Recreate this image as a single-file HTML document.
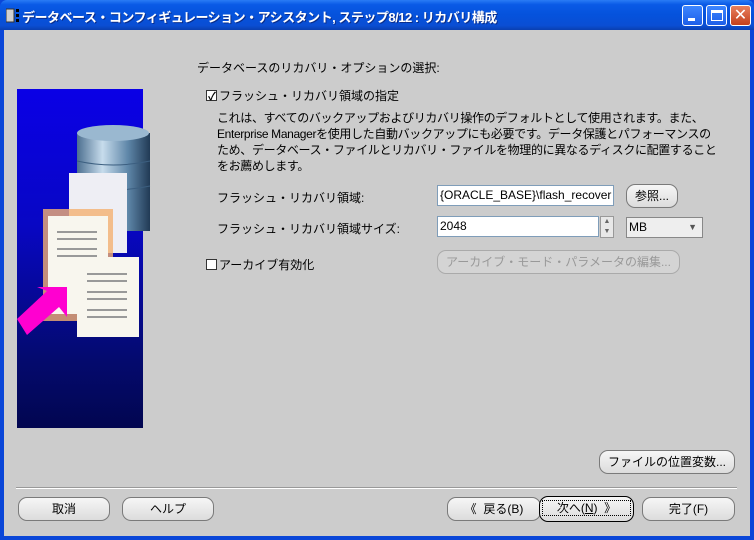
<!DOCTYPE html>
<html><head><meta charset="utf-8"><style>
*{margin:0;padding:0;box-sizing:border-box}
body{width:754px;height:540px;overflow:hidden;background:#0a46d8;font-family:"Liberation Sans","Noto Sans CJK JP",sans-serif;font-size:12px;color:#000;position:relative}
.title{position:absolute;left:0;top:0;width:754px;height:30px;background:linear-gradient(#2a7cf5 0%,#0a5ae6 15%,#0552dc 50%,#0a4ed4 85%,#0a3fb0 100%);border-radius:7px 7px 0 0}
.title .t{position:absolute;left:22px;top:7px;color:#fff;font-size:13px;font-weight:bold;letter-spacing:-0.5px;text-shadow:1px 1px #0a2d8a}
.client{position:absolute;left:4px;top:30px;width:746px;height:506px;background:#cccccc}
.abs{position:absolute;white-space:nowrap}
.btn{position:absolute;border:1px solid #7a7a7a;border-radius:9px;background:linear-gradient(#f6f6f6,#dcdcdc);text-align:center;line-height:22px;height:24px;font-size:12px}
.inp{position:absolute;background:#fff;border:1px solid #7f9db9;height:21px;line-height:19px;padding-left:2px;font-size:12px}
.cb{display:inline-block;width:11px;height:11px;border:1px solid #333;background:#fff;vertical-align:-1px;margin-right:2px;position:relative}
.wb{position:absolute;top:5px;width:21px;height:21px;border:1px solid #fff;border-radius:3px;background:linear-gradient(#3d86ff,#1d5ee8)}
</style></head><body>
<div class="title">
 <svg style="position:absolute;left:6px;top:8px" width="14" height="15"><rect x="0" y="1" width="8" height="13" fill="#d0d0d0" stroke="#333"/><rect x="10" y="1" width="3" height="3" fill="#000"/><rect x="10" y="6" width="3" height="3" fill="#000"/><rect x="10" y="11" width="3" height="3" fill="#000"/></svg>
 <div class="t">データベース・コンフィギュレーション・アシスタント, ステップ8/12 : リカバリ構成</div>
 <div class="wb" style="left:682px"><div style="position:absolute;left:5px;top:12px;width:7px;height:3px;background:#fff"></div></div>
 <div class="wb" style="left:706px"><div style="position:absolute;left:4px;top:4px;width:12px;height:11px;border:1px solid #fff;border-top-width:3px"></div></div>
 <div class="wb" style="left:730px;background:linear-gradient(#e8805e,#c4401c);color:#fff;font-size:16px;text-align:center;line-height:19px">✕</div>
</div>
<div class="client">
 <div class="abs" style="left:13px;top:59px;width:126px;height:339px;background:linear-gradient(#0a00e6 0%,#0807c4 40%,#040a6e 80%,#020650 100%);overflow:visible">
  <svg width="140" height="339" style="overflow:visible">
   <defs><linearGradient id="cy" x1="0" x2="1"><stop offset="0" stop-color="#4c6f90"/><stop offset=".35" stop-color="#c7dcec"/><stop offset=".7" stop-color="#5e86a8"/><stop offset="1" stop-color="#213a55"/></linearGradient></defs>
   <rect x="60" y="44" width="73" height="98" fill="url(#cy)"/>
   <ellipse cx="96" cy="44" rx="36" ry="8" fill="#9ab8d0"/>
   <path d="M60 72 q36 8 73 0 M60 97 q36 8 73 0" stroke="#3c5f80" fill="none"/>
   <rect x="52" y="84" width="58" height="80" fill="#eeeef4"/>
   <rect x="26" y="120" width="70" height="112" fill="#f4b070" opacity=".8"/>
   <rect x="31" y="127" width="60" height="98" fill="#f8f6ee"/>
   <rect x="60" y="168" width="62" height="80" fill="#f8f6ee"/>
   <g fill="#999"><rect x="70" y="184" width="40" height="2"/><rect x="70" y="191" width="40" height="2"/><rect x="70" y="202" width="40" height="2"/><rect x="70" y="209" width="40" height="2"/><rect x="70" y="220" width="40" height="2"/><rect x="70" y="227" width="40" height="2"/><rect x="40" y="142" width="40" height="2"/><rect x="40" y="149" width="40" height="2"/><rect x="40" y="159" width="40" height="2"/><rect x="40" y="166" width="40" height="2"/></g>
   <path d="M0 230 L30 202 L20 198 L50 198 L50 228 L42 218 L10 246 Z" fill="#ff00d0"/>
  </svg>
 </div>
 <div class="abs" style="left:193px;top:29px">データベースのリカバリ・オプションの選択:</div>
 <div class="abs" style="left:202px;top:57px"><span class="cb"><span style="position:absolute;left:1px;top:-3px;font-size:11px;font-weight:bold">✓</span></span>フラッシュ・リカバリ領域の指定</div>
 <div class="abs" style="left:213px;top:80px;line-height:16px;letter-spacing:-0.35px">これは、すべてのバックアップおよびリカバリ操作のデフォルトとして使用されます。また、<br>Enterprise Managerを使用した自動バックアップにも必要です。データ保護とパフォーマンスの<br>ため、データベース・ファイルとリカバリ・ファイルを物理的に異なるディスクに配置すること<br>をお薦めします。</div>
 <div class="abs" style="left:213px;top:159px">フラッシュ・リカバリ領域:</div>
 <div class="inp" style="left:433px;top:155px;width:177px">{ORACLE_BASE}\flash_recover</div>
 <div class="btn" style="left:622px;top:154px;width:52px">参照...</div>
 <div class="abs" style="left:213px;top:190px">フラッシュ・リカバリ領域サイズ:</div>
 <div class="inp" style="left:433px;top:186px;width:162px">2048</div>
 <div class="abs" style="left:596px;top:186px;width:14px;height:22px;border:1px solid #999;background:#e8e8e8;font-size:7px;text-align:center;line-height:10px;color:#666">▲<br>▼</div>
 <div class="inp" style="left:622px;top:187px;width:77px;background:#eee;border-color:#888">MB<span style="position:absolute;right:5px;top:0;font-size:9px;color:#555">▼</span></div>
 <div class="abs" style="left:202px;top:226px"><span class="cb"></span>アーカイブ有効化</div>
 <div class="btn" style="left:433px;top:220px;width:243px;color:#999;border-color:#aaa;background:#d4d4d4">アーカイブ・モード・パラメータの編集...</div>
 <div class="btn" style="left:595px;top:420px;width:136px">ファイルの位置変数...</div>
 <div class="abs" style="left:12px;top:457px;width:721px;height:2px;border-top:1px solid #999;border-bottom:1px solid #fff"></div>
 <div class="btn" style="left:14px;top:467px;width:92px">取消</div>
 <div class="btn" style="left:118px;top:467px;width:92px">ヘルプ</div>
 <div class="btn" style="left:443px;top:467px;width:94px">《 &nbsp;戻る(B)</div>
 <div class="btn" style="left:535px;top:466px;width:95px;border:1px solid #000;height:26px"><span style="border:1px dotted #000;padding:0 14px">次へ(<u>N</u>) &nbsp;》</span></div>
 <div class="btn" style="left:638px;top:467px;width:93px">完了(F)</div>
</div>
</body></html>
